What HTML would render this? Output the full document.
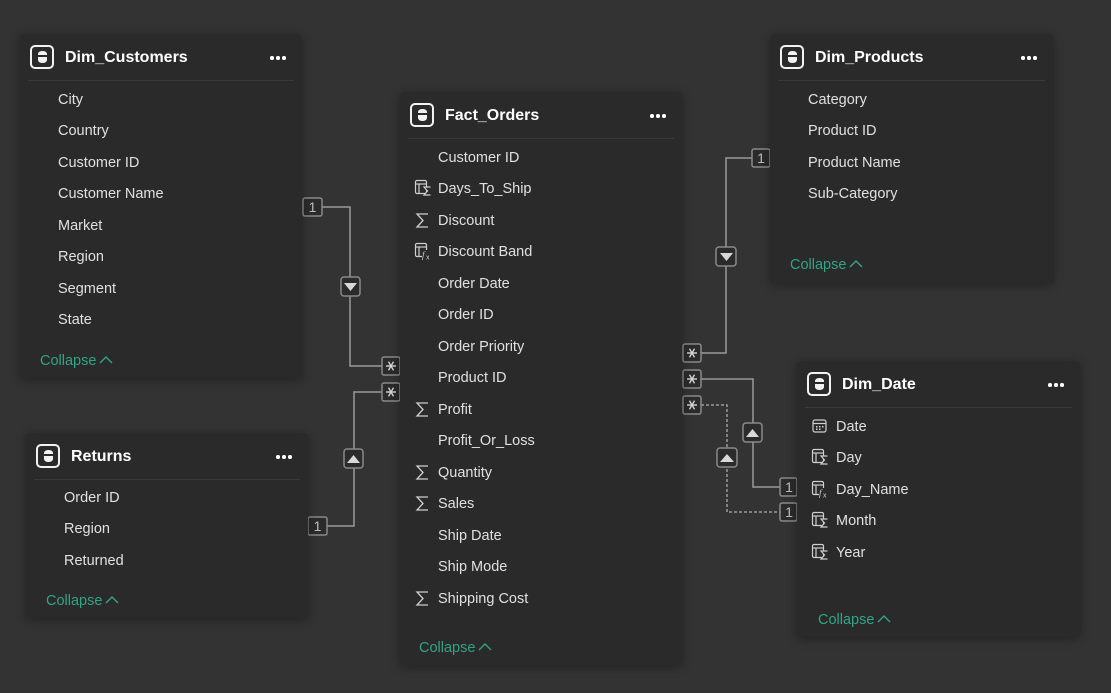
<!DOCTYPE html>
<html><head><meta charset="utf-8">
<style>
*{margin:0;padding:0;box-sizing:border-box}
html,body{width:1111px;height:693px;overflow:hidden}
body{background:#333333;font-family:"Liberation Sans",sans-serif;position:relative;color:#e6e6e6}
.card{position:absolute;background:#2a2a2a;border-radius:4px;box-shadow:0 2px 10px rgba(0,0,0,0.35)}
.hdr{position:absolute;left:0;right:0;top:0;height:47px;border-bottom:1px solid #3a3a3a;margin:0 8px}
.ticon{position:absolute;left:10px;top:11px;width:24px;height:24px;border:2px solid #f2f2f2;border-radius:5px}
.ticon:before{content:"";position:absolute;left:6px;top:4px;width:9px;height:12px;background:#f2f2f2;border-radius:4px/3px}
.ticon:after{content:"";position:absolute;left:6px;top:8px;width:9px;height:1.5px;background:#2a2a2a}
.title{position:absolute;left:45px;top:15px;font-size:16px;font-weight:bold;color:#fff}
.dots{position:absolute;right:16px;top:22px;width:16px;height:4px}
.dots i{position:absolute;top:0;width:3.5px;height:3.5px;border-radius:50%;background:#fff}
.dots i:nth-child(1){left:0}.dots i:nth-child(2){left:6px}.dots i:nth-child(3){left:12px}
.f{position:absolute;font-size:14.5px;color:#e0e0e0;white-space:nowrap;margin-top:1px}
.ic{position:absolute;width:18px;height:18px}
.col{position:absolute;font-size:14.5px;color:#2fa586;margin-top:1px}
.col svg{vertical-align:1px;margin-left:3px}
svg.lines{position:absolute;left:0;top:0}
</style></head><body>

<svg class="lines" width="1111" height="693">
<g fill="none" stroke="#9a9a9a" stroke-width="1.5">
<polyline points="322,207 350,207 350,366 382,366"/>
<polyline points="327,526 354,526 354,392 382,392"/>
<polyline points="752,158 726,158 726,353 701,353"/>
<polyline points="701,379 753,379 753,487 780,487"/>
<polyline points="701,405 727,405 727,512 780,512" stroke-dasharray="3,2"/>
</g>
<g stroke="#8a8a8a" stroke-width="1.5" fill="#2b2b2b">
<rect x="303" y="198" width="19" height="18" rx="2"/>
<rect x="308" y="517" width="19" height="18" rx="2"/>
<rect x="752" y="149" width="18" height="18" rx="2"/>
<rect x="780" y="478" width="17" height="18" rx="2"/>
<rect x="780" y="503" width="17" height="18" rx="2"/>
<rect x="382" y="357" width="18" height="18" rx="2"/>
<rect x="382" y="383" width="18" height="18" rx="2"/>
<rect x="683" y="344" width="18" height="18" rx="2"/>
<rect x="683" y="370" width="18" height="18" rx="2"/>
<rect x="683" y="396" width="18" height="18" rx="2"/>
<rect x="341" y="277" width="19" height="19" rx="3"/>
<rect x="344" y="449" width="19" height="19" rx="3"/>
<rect x="716" y="247" width="20" height="19" rx="3"/>
<rect x="743" y="423" width="19" height="19" rx="3"/>
<rect x="717" y="448" width="20" height="19" rx="3"/>
</g>
<g fill="#d8d8d8">
<polygon points="344,283 357,283 350.5,291"/>
<polygon points="720,253 733,253 726.5,261"/>
<polygon points="347,463 360,463 353.5,455"/>
<polygon points="746,437 759,437 752.5,429"/>
<polygon points="720,462 734,462 727,454"/>
</g>
<g font-family="Liberation Sans" font-size="14" fill="#bdbdbd" text-anchor="middle">
<text x="312.5" y="212">1</text><text x="317.5" y="531">1</text><text x="761" y="163">1</text>
<text x="789" y="492">1</text><text x="789" y="517">1</text>
</g>
<g stroke="#d8d8d8" stroke-width="1.4">
<g transform="translate(391,366)"><line x1="-5" y1="0" x2="5" y2="0"/><line x1="-2.5" y1="-4.3" x2="2.5" y2="4.3"/><line x1="2.5" y1="-4.3" x2="-2.5" y2="4.3"/></g>
<g transform="translate(391,392)"><line x1="-5" y1="0" x2="5" y2="0"/><line x1="-2.5" y1="-4.3" x2="2.5" y2="4.3"/><line x1="2.5" y1="-4.3" x2="-2.5" y2="4.3"/></g>
<g transform="translate(692,353)"><line x1="-5" y1="0" x2="5" y2="0"/><line x1="-2.5" y1="-4.3" x2="2.5" y2="4.3"/><line x1="2.5" y1="-4.3" x2="-2.5" y2="4.3"/></g>
<g transform="translate(692,379)"><line x1="-5" y1="0" x2="5" y2="0"/><line x1="-2.5" y1="-4.3" x2="2.5" y2="4.3"/><line x1="2.5" y1="-4.3" x2="-2.5" y2="4.3"/></g>
<g transform="translate(692,405)"><line x1="-5" y1="0" x2="5" y2="0"/><line x1="-2.5" y1="-4.3" x2="2.5" y2="4.3"/><line x1="2.5" y1="-4.3" x2="-2.5" y2="4.3"/></g>
</g>
</svg>

<!-- Dim_Customers -->
<div class="card" style="left:20px;top:34px;width:282px;height:344px">
<div class="hdr"></div><div class="ticon"></div><div class="title">Dim_Customers</div><div class="dots"><i></i><i></i><i></i></div>
<div class="f" style="left:38px;top:57px">City</div>
<div class="f" style="left:38px;top:88px">Country</div>
<div class="f" style="left:38px;top:120px">Customer ID</div>
<div class="f" style="left:38px;top:151px">Customer Name</div>
<div class="f" style="left:38px;top:183px">Market</div>
<div class="f" style="left:38px;top:214px">Region</div>
<div class="f" style="left:38px;top:246px">Segment</div>
<div class="f" style="left:38px;top:277px">State</div>
<div class="col" style="left:20px;top:318px">Collapse<svg width="14" height="9"><polyline points="1,8 7,2 13,8" fill="none" stroke="#2fa586" stroke-width="1.4"/></svg></div>
</div>

<!-- Returns -->
<div class="card" style="left:26px;top:433px;width:282px;height:185px">
<div class="hdr"></div><div class="ticon"></div><div class="title">Returns</div><div class="dots"><i></i><i></i><i></i></div>
<div class="f" style="left:38px;top:56px">Order ID</div>
<div class="f" style="left:38px;top:87px">Region</div>
<div class="f" style="left:38px;top:119px">Returned</div>
<div class="col" style="left:20px;top:159px">Collapse<svg width="14" height="9"><polyline points="1,8 7,2 13,8" fill="none" stroke="#2fa586" stroke-width="1.4"/></svg></div>
</div>

<!-- Fact_Orders -->
<div class="card" style="left:400px;top:92px;width:282px;height:573px">
<div class="hdr"></div><div class="ticon"></div><div class="title">Fact_Orders</div><div class="dots"><i></i><i></i><i></i></div>
<div class="f" style="left:38px;top:57px">Customer ID</div>
<div class="f" style="left:38px;top:88px">Days_To_Ship</div>
<div class="f" style="left:38px;top:120px">Discount</div>
<div class="f" style="left:38px;top:151px">Discount Band</div>
<div class="f" style="left:38px;top:183px">Order Date</div>
<div class="f" style="left:38px;top:214px">Order ID</div>
<div class="f" style="left:38px;top:246px">Order Priority</div>
<div class="f" style="left:38px;top:277px">Product ID</div>
<div class="f" style="left:38px;top:309px">Profit</div>
<div class="f" style="left:38px;top:340px">Profit_Or_Loss</div>
<div class="f" style="left:38px;top:372px">Quantity</div>
<div class="f" style="left:38px;top:403px">Sales</div>
<div class="f" style="left:38px;top:435px">Ship Date</div>
<div class="f" style="left:38px;top:466px">Ship Mode</div>
<div class="f" style="left:38px;top:498px">Shipping Cost</div>
<div class="col" style="left:19px;top:547px">Collapse<svg width="14" height="9"><polyline points="1,8 7,2 13,8" fill="none" stroke="#2fa586" stroke-width="1.4"/></svg></div>
<svg class="ic" style="left:14px;top:87px" viewBox="0 0 18 18"><g fill="none" stroke="#cfcfcf" stroke-width="1.2"><rect x="1.5" y="1.5" width="11" height="13" rx="1.5"/><line x1="1.5" y1="5" x2="12.5" y2="5"/><line x1="5" y1="5" x2="5" y2="14.5"/><polyline points="16.5,8 10,8 13.5,12 10,16 16.5,16" fill="#2a2a2a"/></g></svg>
<svg class="ic" style="left:14px;top:119px" viewBox="0 0 18 18"><polyline points="14,3 3,3 9,9.5 3,16 14,16" fill="none" stroke="#cfcfcf" stroke-width="1.3"/></svg>
<svg class="ic" style="left:14px;top:150px" viewBox="0 0 18 18"><g fill="none" stroke="#cfcfcf" stroke-width="1.2"><rect x="1.5" y="1.5" width="11" height="13" rx="1.5"/><line x1="1.5" y1="5" x2="12.5" y2="5"/><line x1="5" y1="5" x2="5" y2="14.5"/></g><rect x="8" y="8" width="10" height="10" fill="#2a2a2a"/><text x="8" y="16" font-size="9" font-style="italic" fill="#cfcfcf" font-family="Liberation Serif">f</text><text x="12" y="17.5" font-size="7" fill="#cfcfcf" font-family="Liberation Sans">x</text></svg>
<svg class="ic" style="left:14px;top:308px" viewBox="0 0 18 18"><polyline points="14,3 3,3 9,9.5 3,16 14,16" fill="none" stroke="#cfcfcf" stroke-width="1.3"/></svg>
<svg class="ic" style="left:14px;top:371px" viewBox="0 0 18 18"><polyline points="14,3 3,3 9,9.5 3,16 14,16" fill="none" stroke="#cfcfcf" stroke-width="1.3"/></svg>
<svg class="ic" style="left:14px;top:402px" viewBox="0 0 18 18"><polyline points="14,3 3,3 9,9.5 3,16 14,16" fill="none" stroke="#cfcfcf" stroke-width="1.3"/></svg>
<svg class="ic" style="left:14px;top:497px" viewBox="0 0 18 18"><polyline points="14,3 3,3 9,9.5 3,16 14,16" fill="none" stroke="#cfcfcf" stroke-width="1.3"/></svg>
</div>

<!-- Dim_Products -->
<div class="card" style="left:770px;top:34px;width:283px;height:249px">
<div class="hdr"></div><div class="ticon"></div><div class="title">Dim_Products</div><div class="dots"><i></i><i></i><i></i></div>
<div class="f" style="left:38px;top:57px">Category</div>
<div class="f" style="left:38px;top:88px">Product ID</div>
<div class="f" style="left:38px;top:120px">Product Name</div>
<div class="f" style="left:38px;top:151px">Sub-Category</div>
<div class="col" style="left:20px;top:222px">Collapse<svg width="14" height="9"><polyline points="1,8 7,2 13,8" fill="none" stroke="#2fa586" stroke-width="1.4"/></svg></div>
</div>

<!-- Dim_Date -->
<div class="card" style="left:797px;top:361px;width:283px;height:276px">
<div class="hdr"></div><div class="ticon"></div><div class="title">Dim_Date</div><div class="dots"><i></i><i></i><i></i></div>
<div class="f" style="left:39px;top:57px">Date</div>
<div class="f" style="left:39px;top:88px">Day</div>
<div class="f" style="left:39px;top:120px">Day_Name</div>
<div class="f" style="left:39px;top:151px">Month</div>
<div class="f" style="left:39px;top:183px">Year</div>
<div class="col" style="left:21px;top:250px">Collapse<svg width="14" height="9"><polyline points="1,8 7,2 13,8" fill="none" stroke="#2fa586" stroke-width="1.4"/></svg></div>
<svg class="ic" style="left:14px;top:56px" viewBox="0 0 18 18"><g fill="none" stroke="#cfcfcf" stroke-width="1.2"><rect x="2" y="3" width="13" height="12" rx="2"/><line x1="2" y1="6.5" x2="15" y2="6.5"/></g><g fill="#cfcfcf"><rect x="5" y="9" width="1.5" height="1.5"/><rect x="8" y="9" width="1.5" height="1.5"/><rect x="11" y="9" width="1.5" height="1.5"/><rect x="5" y="11.5" width="1.5" height="1.5"/><rect x="8" y="11.5" width="1.5" height="1.5"/></g></svg>
<svg class="ic" style="left:14px;top:87px" viewBox="0 0 18 18"><g fill="none" stroke="#cfcfcf" stroke-width="1.2"><rect x="1.5" y="1.5" width="11" height="13" rx="1.5"/><line x1="1.5" y1="5" x2="12.5" y2="5"/><line x1="5" y1="5" x2="5" y2="14.5"/><polyline points="16.5,8 10,8 13.5,12 10,16 16.5,16" fill="#2a2a2a"/></g></svg>
<svg class="ic" style="left:14px;top:119px" viewBox="0 0 18 18"><g fill="none" stroke="#cfcfcf" stroke-width="1.2"><rect x="1.5" y="1.5" width="11" height="13" rx="1.5"/><line x1="1.5" y1="5" x2="12.5" y2="5"/><line x1="5" y1="5" x2="5" y2="14.5"/></g><rect x="8" y="8" width="10" height="10" fill="#2a2a2a"/><text x="8" y="16" font-size="9" font-style="italic" fill="#cfcfcf" font-family="Liberation Serif">f</text><text x="12" y="17.5" font-size="7" fill="#cfcfcf" font-family="Liberation Sans">x</text></svg>
<svg class="ic" style="left:14px;top:150px" viewBox="0 0 18 18"><g fill="none" stroke="#cfcfcf" stroke-width="1.2"><rect x="1.5" y="1.5" width="11" height="13" rx="1.5"/><line x1="1.5" y1="5" x2="12.5" y2="5"/><line x1="5" y1="5" x2="5" y2="14.5"/><polyline points="16.5,8 10,8 13.5,12 10,16 16.5,16" fill="#2a2a2a"/></g></svg>
<svg class="ic" style="left:14px;top:182px" viewBox="0 0 18 18"><g fill="none" stroke="#cfcfcf" stroke-width="1.2"><rect x="1.5" y="1.5" width="11" height="13" rx="1.5"/><line x1="1.5" y1="5" x2="12.5" y2="5"/><line x1="5" y1="5" x2="5" y2="14.5"/><polyline points="16.5,8 10,8 13.5,12 10,16 16.5,16" fill="#2a2a2a"/></g></svg>
</div>

</body></html>
